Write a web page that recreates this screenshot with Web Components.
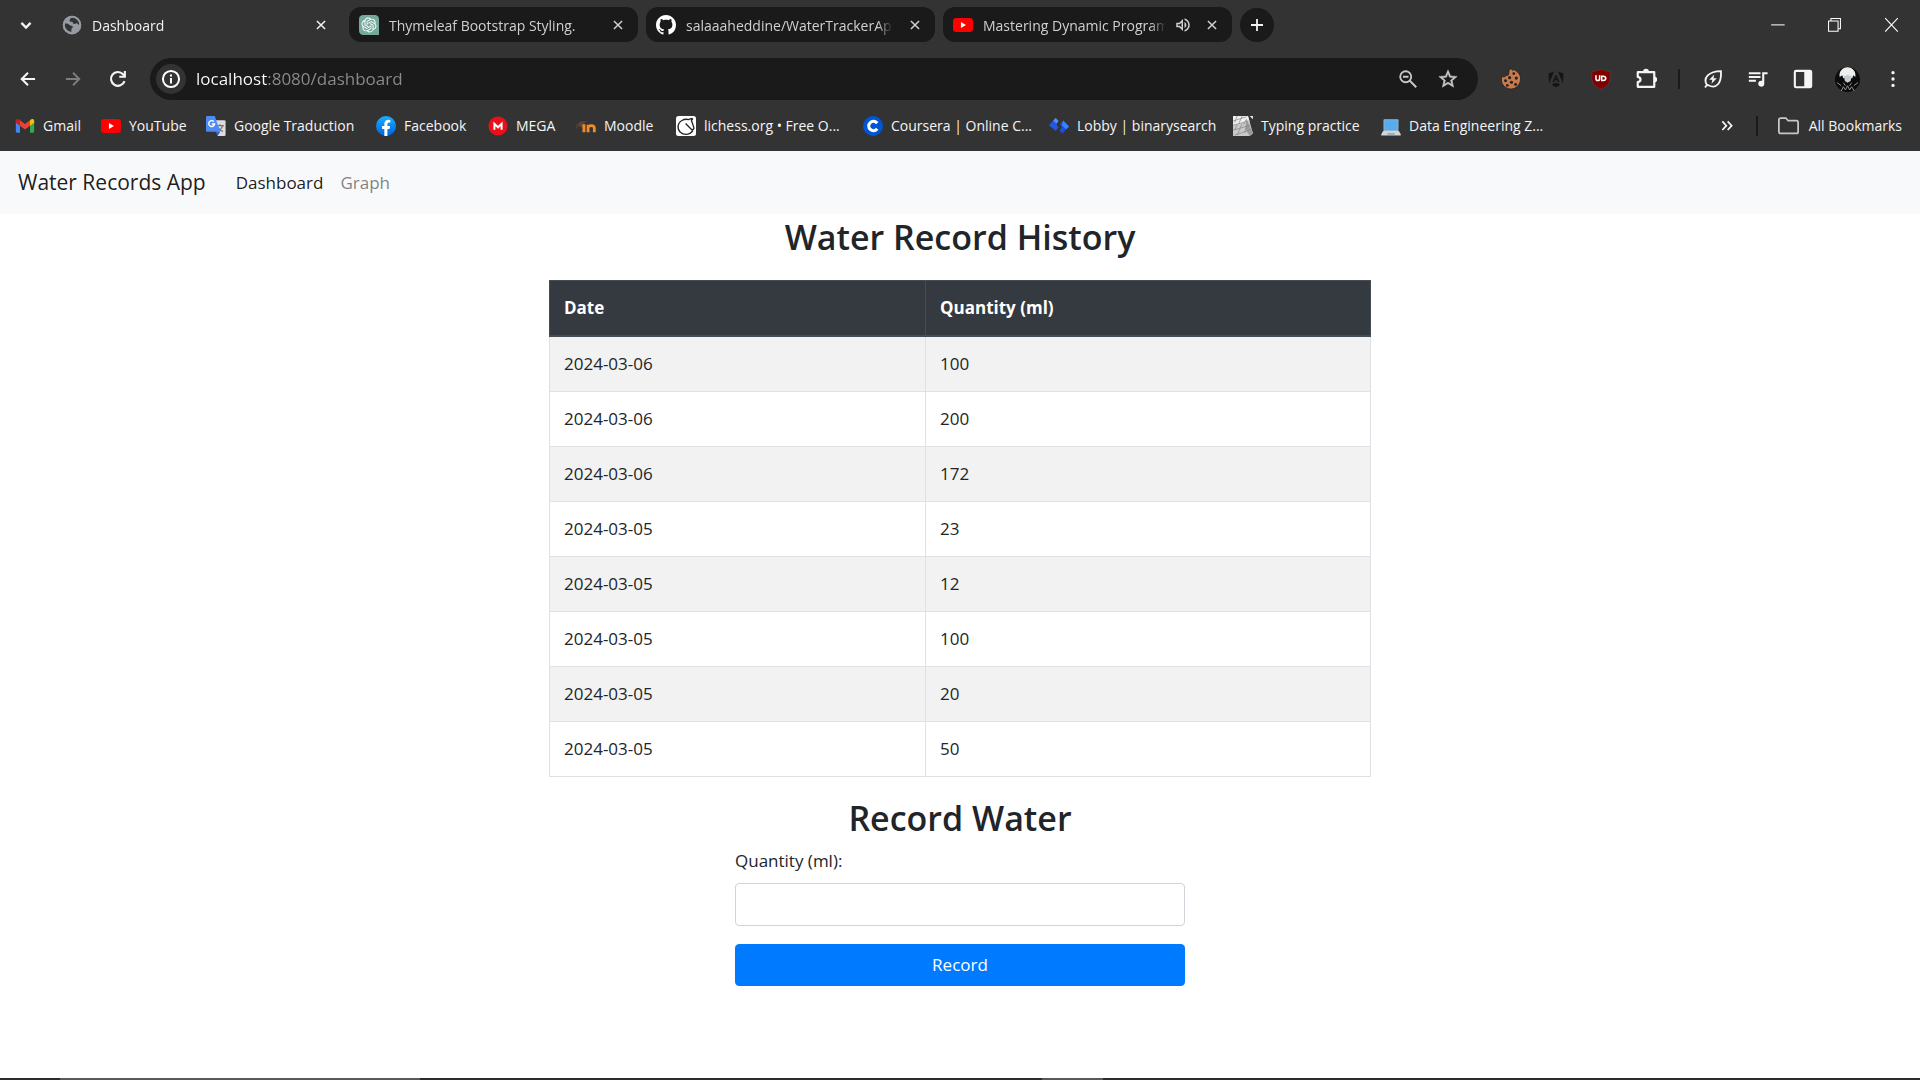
<!DOCTYPE html>
<html lang="en">
<head>
<meta charset="utf-8">
<title>Dashboard</title>
<style>
  body { margin: 0; min-height: 100vh; display: flex; flex-direction: column; background: #fff; color: #212529; font-family: "Open Sans", sans-serif; }
  water-page { flex: 1; }
</style>
</head>
<body>
<browser-chrome></browser-chrome>
<water-page></water-page>
<task-bar></task-bar>

<script>
const ICONS = {
  chevron: '<path d="M6.500 9.500 12 15l5.500-5.500" fill="none" stroke="currentColor" stroke-width="2.800"/>',
  close: '<path d="M5 5l14 14M19 5 5 19" fill="none" stroke="currentColor" stroke-width="2.600"/>',
  plus: '<path d="M12 4v16M4 12h16" fill="none" stroke="currentColor" stroke-width="2.400"/>',
  back: '<path d="M20.500 12H5M12 4.500 4.500 12l7.500 7.500" fill="none" stroke="currentColor" stroke-width="2.500"/>',
  forward: '<path d="M3.500 12H19M12 4.500l7.500 7.500-7.500 7.500" fill="none" stroke="currentColor" stroke-width="2.300"/>',
  reload: '<path d="M19.800 14.500A8.300 8.300 0 1 1 18 6.200l2 2.300" fill="none" stroke="currentColor" stroke-width="2.600"/><path d="M21.500 2.500v8h-8V8h5.500V2.500z" fill="currentColor"/>',
  info: '<circle cx="12" cy="12" r="8.800" fill="none" stroke="currentColor" stroke-width="2.200"/><path d="M10.900 11h2.200v6h-2.200zM10.900 7h2.200v2.300h-2.200z" fill="currentColor"/>',
  zoomout: '<circle cx="9.500" cy="9.500" r="6" fill="none" stroke="currentColor" stroke-width="2"/><path d="M6.500 9.500h6M14 14l7 7" fill="none" stroke="currentColor" stroke-width="2.200"/>',
  star: '<path fill="currentColor" stroke="currentColor" stroke-width=".5" d="M22 9.240l-7.190-.620L12 2 9.190 8.630 2 9.240l5.460 4.730L5.820 21 12 17.270 18.180 21l-1.630-7.030L22 9.240zM12 15.400l-3.760 2.270 1-4.280-3.320-2.880 4.380-.380L12 6.100l1.710 4.040 4.380.380-3.320 2.880 1 4.280L12 15.400z"/>',
  volume: '<path fill="currentColor" d="M3 9v6h4l5 5V4L7 9H3zm7-.170v6.340L7.830 13H5v-2h2.830L10 8.830zM16.500 12c0-1.770-1.020-3.290-2.500-4.030v8.050c1.480-.730 2.500-2.250 2.500-4.020zM14 3.230v2.060c2.890.860 5 3.540 5 6.710s-2.110 5.850-5 6.710v2.060c4.010-.910 7-4.490 7-8.770 0-4.280-2.990-7.860-7-8.770z"/>',
  globe: '<circle cx="12" cy="12" r="11" fill="#969ba3"/><path fill="#333" d="M3.500 10.300c2.200-.2 4 .2 5.300 1.500 1.500 1.500 4.200.6 4.200 2.400 0 1.600-1.700 1.500-1.700 3v3c-4.800-.2-8.800-4.600-7.800-9.900zM13 3.200c-2.600-.3-3.300 1.300-3.800 3-.4 1.600 1 2.100 2.600 2 1.500 0 1 2.300 2.600 2.600 1.500.3 2.100-1.200 3.500-.8 1.500.4 1.300 1.900 3 2C21.300 7.600 17.500 3.800 13 3.200z"/><circle cx="12" cy="12" r="10" fill="none" stroke="#969ba3" stroke-width="2.200"/>',
  openai: '<path d="M5 0h14a5 5 0 0 1 5 5v19H5a5 5 0 0 1-5-5V5a5 5 0 0 1 5-5z" fill="#74aa9c"/><g transform="translate(3 3) scale(.75)"><path fill="#fff" d="M22.2819 9.8211a5.9847 5.9847 0 0 0-.5157-4.9108 6.0462 6.0462 0 0 0-6.5098-2.9A6.0651 6.0651 0 0 0 4.9807 4.1818a5.9847 5.9847 0 0 0-3.9977 2.9 6.0462 6.0462 0 0 0 .7427 7.0966 5.98 5.98 0 0 0 .511 4.9107 6.051 6.051 0 0 0 6.5146 2.9001A5.9847 5.9847 0 0 0 13.2599 24a6.0557 6.0557 0 0 0 5.7718-4.2058 5.9894 5.9894 0 0 0 3.9977-2.9001 6.0557 6.0557 0 0 0-.7475-7.0729zm-9.022 12.6081a4.4755 4.4755 0 0 1-2.8764-1.0408l.1419-.0804 4.7783-2.7582a.7948.7948 0 0 0 .3927-.6813v-6.7369l2.02 1.1686a.071.071 0 0 1 .038.052v5.5826a4.504 4.504 0 0 1-4.4945 4.4944zm-9.6607-4.1254a4.4708 4.4708 0 0 1-.5346-3.0137l.142.0852 4.783 2.7582a.7712.7712 0 0 0 .7806 0l5.8428-3.3685v2.3324a.0804.0804 0 0 1-.0332.0615L9.74 19.9502a4.4992 4.4992 0 0 1-6.1408-1.6464zM2.3408 7.8956a4.485 4.485 0 0 1 2.3655-1.9728V11.6a.7664.7664 0 0 0 .3879.6765l5.8144 3.3543-2.0201 1.1685a.0757.0757 0 0 1-.071 0l-4.8303-2.7865A4.504 4.504 0 0 1 2.3408 7.872zm16.5963 3.8558L13.1038 8.364 15.1192 7.2a.0757.0757 0 0 1 .071 0l4.8303 2.7913a4.4944 4.4944 0 0 1-.6765 8.1042v-5.6772a.79.79 0 0 0-.407-.667zm2.0107-3.0231l-.142-.0852-4.7735-2.7818a.7759.7759 0 0 0-.7854 0L9.409 9.2297V6.8974a.0662.0662 0 0 1 .0284-.0615l4.8303-2.7866a4.4992 4.4992 0 0 1 6.6802 4.66zM8.3065 12.863l-2.02-1.1638a.0804.0804 0 0 1-.038-.0567V6.0742a4.4992 4.4992 0 0 1 7.3757-3.4537l-.142.0805L8.704 5.459a.7948.7948 0 0 0-.3927.6813zm1.0976-2.3654l2.602-1.4998 2.6069 1.4998v2.9994l-2.5974 1.4997-2.6067-1.4997Z"/></g>',
  github: '<g transform="scale(1.5)"><path fill="#fff" d="M8 0C3.58 0 0 3.58 0 8c0 3.54 2.29 6.53 5.47 7.59.4.07.55-.17.55-.38 0-.19-.01-.82-.01-1.49-2.01.37-2.53-.49-2.69-.94-.09-.23-.48-.94-.82-1.13-.28-.15-.68-.52-.01-.53.63-.01 1.08.58 1.23.82.72 1.21 1.87.87 2.33.66.07-.52.28-.87.51-1.07-1.78-.2-3.64-.89-3.64-3.95 0-.87.31-1.59.82-2.15-.08-.2-.36-1.02.08-2.12 0 0 .67-.21 2.2.82.64-.18 1.32-.27 2-.27s1.36.09 2 .27c1.53-1.04 2.2-.82 2.2-.82.44 1.1.16 1.92.08 2.12.51.56.82 1.27.82 2.15 0 3.07-1.87 3.75-3.65 3.95.29.25.54.73.54 1.48 0 1.07-.01 1.93-.01 2.2 0 .21.15.46.55.38A8.01 8.01 0 0 0 16 8c0-4.42-3.58-8-8-8z"/></g>',
  youtube: '<rect y="3.500" width="24" height="17" rx="4" fill="#f00"/><path d="M9.500 8.500v7l6-3.500z" fill="#fff"/>',
  gmail: '<path d="M1 5.500v13A1.700 1.700 0 0 0 2.700 20H6V9.500z" fill="#4285f4"/><path d="M23 5.500v13a1.700 1.700 0 0 1-1.700 1.500H18V9.500z" fill="#34a853"/><path d="M18 5.500v6.300l5-3.800V6c0-2.500-2.500-3-4-1.800z" fill="#fbbc04"/><path d="M1 6v2l5 3.800V5.500L5 4.200C3.500 3 1 3.500 1 6z" fill="#c5221f"/><path d="M6 5v6.800l6 4.500 6-4.500V5l-6 4.500z" fill="#ea4335"/>',
  translate: '<path d="M10 5h12a1.500 1.500 0 0 1 1.500 1.500v16A1.500 1.500 0 0 1 22 24h-8z" fill="#dadce0"/><path d="M12.500 11.500h9M17 9.800v1.700M20 11.500c-.8 3-3 5.500-6 7M14.500 13.500c1 2.500 3 4.300 6 5" fill="none" stroke="#6f7479" stroke-width="1.300"/><path d="M1.500 0h9L17 19H1.500A1.500 1.500 0 0 1 0 17.500v-16A1.500 1.500 0 0 1 1.500 0z" fill="#4c8bf5"/><path d="M11 19h6l-3 5z" fill="#3060c8"/><path d="M9.500 6.800A3.500 3.500 0 1 0 10.300 9.500H7" fill="none" stroke="#fff" stroke-width="1.700"/>',
  facebook: '<linearGradient id="f" x2="0" y2="1"><stop stop-color="#19afff"/><stop offset="1" stop-color="#0062e0"/></linearGradient><circle cx="12" cy="12" r="12" fill="url(#f)"/><path d="M10 23.900v-8.300H7.300V12H10V9.800c0-3.400 1.900-5.300 4.900-5.300l2.300.2v3.100h-1.600c-1.400 0-1.900.9-1.900 1.900V12h3.200l-.6 3.600h-2.600v8.300z" fill="#fff"/>',
  mega: '<circle cx="12" cy="12" r="11.500" fill="#e9101c"/><path d="M7.700 16.500V9.300l4.300 4.200 4.300-4.200v7.200" fill="none" stroke="#fff" stroke-width="2.400"/>',
  moodle: '<path d="M1 10 6 6.500l7-.5-5 4z" fill="#4a4a4a"/><path d="M1.300 10v5" fill="none" stroke="#6a4a30"/><path d="M3.500 12c1-1 2-1.500 4-1.300v3" fill="none" stroke="#6b4628" stroke-width="3"/><path d="M9.500 19.500V10M14.500 19.500v-9M14.500 14.500c0-4 7.500-4 7.500 0v5" fill="none" stroke="#f28c28" stroke-width="3.400"/>',
  lichess: '<rect width="24" height="24" rx="3" fill="#fff"/><path d="M20 3c-2 .2-3.600.5-4.700 1.300C10 2.800 3 6 2.500 12.500 2 18.500 7 22 12 22c4 0 6.500-2 8.300-4.800M20 3c-.3 1-.8 1.700-1.500 2.200l3 9c.3 1-1.400 2.700-2.600 2.200L11.500 9" fill="none" stroke="#222" stroke-width="1.600"/>',
  coursera: '<circle cx="12" cy="12" r="12" fill="#0056d2"/><path d="M17 8.700A5.600 5.600 0 1 0 17 15.300" fill="none" stroke="#fff" stroke-width="3.600"/>',
  binary: '<path d="M0 11 8 2.500l3.500 3.500L9 10.500l2.500 3L8 18z" fill="#2456e6"/><path d="M5 5.500 8 2.500l3.500 3.500L9 9z" fill="#4a90ff"/><path d="M13 9.500 17 5.500l7 7-8 8.500-3.500-4 3-3.500z" fill="#1f4fe0"/><path d="m17 5.500 7 7-3.500 3.500-5-5z" fill="#3b82f6"/>',
  typing: '<path d="M0 0h18l6 21-4 3H0z" fill="#c9c9c9"/><path d="M0 0h18l2 7-20 4z" fill="#f0f0f0"/><path d="M16 3 24 21l-4 3-5-8z" fill="#9b9b9b"/><path d="M0 6l16-5M0 11l19-5M0 17l21-6M2 23l21-7M5 0l-3 8M11 0l-4 9M16 4l-3 6M5 10l-3 7M11 9l-3 7M17 10l-3 10M8 16l-3 7" stroke="#8a8a8a" stroke-width=".9" fill="none"/><path d="M20 0h4v4z" fill="#e8e8e8"/>',
  laptop: '<rect x="3" y="4" width="18" height="14" rx="1" fill="#9fb8c8"/><rect x="4" y="5" width="16" height="12" fill="#55acee"/><path d="M2.500 18h19L24 22.500a1 1 0 0 1-1 1H1a1 1 0 0 1-1-1z" fill="#ccd6dd"/><path d="M8 20.500h8l.5 2h-9z" fill="#99aab5"/>',
  cookie: '<path d="M10 1.500c2-.8 3.500-.3 3.500 1 1-.8 3-.5 4 .5 3 2 5 5 5 8.500C22.500 18 17.500 23 12 23S1.500 18.500 1.500 13c0-1.500.3-3 1-4 1.500 1.300 3.800.6 4-1 2 .5 3.500-.5 3-2.500z" fill="#c57b4e" stroke="#2a211c"/><g fill="#2a211c"><circle cx="15" cy="6" r="1.500"/><circle cx="10.500" cy="10.500" r="1.700"/><circle cx="17.800" cy="11" r="1.700"/><circle cx="6" cy="14" r="1.600"/><circle cx="12.500" cy="15.500" r="1.700"/><circle cx="8" cy="19" r="1.500"/><circle cx="17" cy="18" r="1.600"/></g>',
  angular: '<path d="M9.500 3 3 5.500 3.800 17zM14.500 3 21 5.500 20.200 17zM7.500 19.500 12 22l4.500-2.500-1-2.300h-7zM12 6.500 7.800 15.500h2l.9-2h2.600l.9 2h2zM12 9.800l.9 2.200h-1.800z" fill="#141414"/>',
  shield: '<path d="M12 1c3 1.800 6 2.600 10 2.800V10c0 7-3.500 10.300-10 13C5.500 20.300 2 17 2 10V3.800C6 3.600 9 2.800 12 1z" fill="#800000" stroke="#6a4040" stroke-width=".6"/><path d="M6.500 8v3.700c0 2.600 4 2.600 4 0V8M12.800 8.900v4.700h1.700c3.600 0 3.600-4.700 0-4.700z" fill="none" stroke="#fff" stroke-width="1.700"/>',
  puzzle: '<path d="M3 4.500h18v16H3v-5.200c4-.6 4-5 0-5.600z" fill="none" stroke="currentColor" stroke-width="2.400" stroke-linejoin="round"/><path d="M8.800 4a3.200 3.200 0 0 1 6.400 0zM21 9.300a3.200 3.200 0 0 1 0 6.400z" fill="currentColor"/>',
  leaf: '<path d="M4.700 19.300C-.5 11 7 2.500 21.500 2.500 22.500 17 16 24.500 6.500 19.500c-1.800-.5-3 .5-4 2.700" fill="none" stroke="currentColor" stroke-width="2.200"/><path d="M13.500 6.500 7.500 13h3.700l-1 4.800L16.500 11h-3.900z" fill="currentColor"/>',
  queue: '<path fill="currentColor" d="M15 4H1v2.300h14V4zm0 4.500H1v2.300h14V8.500zM1 15.300h8.500V13H1v2.300zM17 4v10.180c-.310-.110-.650-.180-1-.180a3.600 3.600 0 1 0 3.500 3.600V6.300h4V4z"/>',
  panel: '<rect x="2.200" y="2.200" width="19.600" height="19.600" rx="1.500" fill="none" stroke="currentColor" stroke-width="2.500"/><path d="M13.500 2h8v20h-8z" fill="currentColor"/>',
  avatar: '<circle cx="12" cy="12" r="12" fill="#0b0b0b"/><path d="M4.500 9.500c-1-5 2.500-9 7.500-9.200 5 .1 8.500 4.200 7.500 9.200L17.500 8l-1 3-3-2-2 2.500L9.500 9 8 11 7 8z" fill="#eee"/><path d="M8.500 9 12 7.500 16 9l-1 4.500-3 1.500-2.500-1.500z" fill="#c3cdd2"/><path d="m6 23 2-4 2 3 2-4 2 4 2-3 2.500 4M2 15l4 3M22 15l-4 3M8 15l2 3M16 15l-2 3" stroke="#999" fill="none" stroke-width=".9"/>',
  dots: '<g fill="currentColor"><circle cx="12" cy="3.500" r="2.200"/><circle cx="12" cy="12" r="2.200"/><circle cx="12" cy="20.500" r="2.200"/></g>',
  folder: '<path d="M1 5.500a2 2 0 0 1 2-2h6l2.500 3H21a2 2 0 0 1 2 2V19a2 2 0 0 1-2 2H3a2 2 0 0 1-2-2z" fill="none" stroke="currentColor" stroke-width="2"/>',
  more: '<path d="m5 5 6 6.500L5 18M13 5l6 6.500-6 6.500" fill="none" stroke="currentColor" stroke-width="2.600"/>',
  minimize: '<path d="M4 12.500h17" stroke="currentColor" stroke-width="1.300"/>',
  restore: '<path d="M4.500 7.500h12v13h-12zM7.500 7V4.500h12v13H17" fill="none" stroke="currentColor" stroke-width="1.300"/>',
  exit: '<path d="m4 4 16 17M20 4 4 21" fill="none" stroke="currentColor" stroke-width="1.400"/>'
};

/* Base class: renders the template() result of a subclass into an open shadow root. */
class ShadowElement extends HTMLElement {
  connectedCallback() {
    if (!this.shadowRoot) this.attachShadow({ mode: "open" }).innerHTML = this.template();
  }
  attr(name) { return this.getAttribute(name) || ""; }
}

customElements.define("ui-icon", class extends ShadowElement {
  template() {
    return `<style>:host{display:block;flex:none;width:var(--size,20px);height:var(--size,20px)}svg{display:block;width:100%;height:100%}</style>
      <svg viewBox="0 0 24 24" aria-hidden="true">${ICONS[this.attr("name")]}</svg>`;
  }
});

customElements.define("icon-button", class extends ShadowElement {
  template() {
    return `<style>
      :host{display:block;flex:none}
      button{display:flex;align-items:center;justify-content:center;width:var(--box,45px);height:var(--box-height,var(--box,42px));padding:0;border:0;border-radius:var(--radius,0);background:var(--fill,none);color:inherit}
      </style><button type="button" aria-label="${this.attr("label")}"><ui-icon name="${this.attr("icon")}"></ui-icon></button>`;
  }
});

customElements.define("browser-tab", class extends ShadowElement {
  template() {
    return `<style>
      :host{display:flex;align-items:center;flex:0 1 289px;min-width:0;box-sizing:border-box;height:35px;padding:0 12px 0 10px;gap:14px;border-radius:12px;background:#1a1a1a;color:#d0d0d0;font-size:14px;line-height:20px}
      :host([active]){background:none;color:#f2f2f2}
      .title{display:flex;align-items:center;gap:10px;flex:1;min-width:0}
      .text{flex:1;min-width:0;padding-top:2px;overflow:hidden;white-space:nowrap;-webkit-mask:linear-gradient(to left,transparent,#000 16px);mask:linear-gradient(to left,transparent,#000 16px)}
      .end{display:flex;align-items:center;gap:12px;--size:18px;--box:16px}
      .end icon-button{--size:14px}
      :host([audible]){gap:8px}
      </style>
      <div class="title"><ui-icon name="${this.attr("icon")}"></ui-icon><span class="text"><slot></slot></span></div>
      <div class="end">${this.hasAttribute("audible") ? '<ui-icon name="volume"></ui-icon>' : ""}<icon-button icon="close" label="Close tab"></icon-button></div>`;
  }
});

customElements.define("tab-strip", class extends ShadowElement {
  template() {
    return `<style>
      :host{display:flex;align-items:flex-start;padding:7px 0 16px 7px;color:#f2f2f2}
      .tabs{display:flex;align-items:center;flex:1;min-width:0;gap:8px}
      .search{--box:37px;--box-height:35px;--size:20px}
      .new{--box:34px;--radius:17px;--fill:#1a1a1a;--size:18px}
      .window{display:flex;--box:57px;--box-height:35px;--size:19px;color:#fff}
      </style>
      <div class="tabs">
        <icon-button class="search" icon="chevron" label="Search tabs"></icon-button>
        <browser-tab active icon="globe">Dashboard</browser-tab>
        <browser-tab icon="openai">Thymeleaf Bootstrap Styling.</browser-tab>
        <browser-tab icon="github">salaaaheddine/WaterTrackerApp</browser-tab>
        <browser-tab icon="youtube" audible>Mastering Dynamic Programming</browser-tab>
        <icon-button class="new" icon="plus" label="New tab"></icon-button>
      </div>
      <div class="window">
        <icon-button icon="minimize" label="Minimize"></icon-button>
        <icon-button icon="restore" label="Restore"></icon-button>
        <icon-button icon="exit" label="Close"></icon-button>
      </div>`;
  }
});

customElements.define("address-bar", class extends ShadowElement {
  template() {
    return `<style>
      :host{display:flex;align-items:center;flex:1;min-width:0;height:42px;box-sizing:border-box;margin:0 10px;padding:0 10px 0 6px;border-radius:21px;background:#1a1a1a}
      .info{--box:30px;--radius:15px;--fill:#333;--size:22px;color:#fff}
      input{flex:1;min-width:0;margin:0 0 0 10px;padding:0;border:0;outline:0;font:17px/24px "Open Sans",sans-serif;color:#8c8c8c;
        background:linear-gradient(90deg,#fff 0 72px,#8c8c8c 72px);-webkit-background-clip:text;background-clip:text;-webkit-text-fill-color:transparent}
      .actions{display:flex;--box:40px;--size:22px;color:#c8c8c8}
      </style>
      <icon-button class="info" icon="info" label="View site information"></icon-button>
      <input type="text" aria-label="Address and search bar" value="localhost:8080/dashboard" spellcheck="false">
      <div class="actions">
        <icon-button icon="zoomout" label="Zoom"></icon-button>
        <icon-button icon="star" label="Bookmark this tab"></icon-button>
      </div>`;
  }
});

customElements.define("tool-bar", class extends ShadowElement {
  template() {
    return `<style>
      :host{display:flex;align-items:center;padding:0 5px;color:#f5f5f5}
      .group{display:flex;align-items:center}
      .nav{--size:20px}.off{color:#7d7d7d}
      hr{width:2px;height:20px;margin:0 10px;border:0;background:#1a1a1a}
      .avatar{--size:25px}
      .menu{--size:18px}
      .extension{--size:22px}
      </style>
      <div class="group nav">
        <icon-button icon="back" label="Back"></icon-button>
        <icon-button class="off" icon="forward" label="Forward"></icon-button>
        <icon-button icon="reload" label="Reload"></icon-button>
      </div>
      <address-bar></address-bar>
      <div class="group">
        <icon-button class="extension" icon="cookie" label="Cookie editor"></icon-button>
        <icon-button icon="angular" label="Angular DevTools"></icon-button>
        <icon-button class="extension" icon="shield" label="uBlock Origin"></icon-button>
        <icon-button class="extension" icon="puzzle" label="Extensions"></icon-button>
        <hr>
        <icon-button icon="leaf" label="Energy saver"></icon-button>
        <icon-button icon="queue" label="Media controls"></icon-button>
        <icon-button icon="panel" label="Side panel"></icon-button>
        <icon-button class="avatar" icon="avatar" label="Profile"></icon-button>
        <icon-button class="menu" icon="dots" label="Menu"></icon-button>
      </div>`;
  }
});

customElements.define("bookmark-link", class extends ShadowElement {
  template() {
    return `<style>
      :host{display:block;flex:none}
      a{display:flex;align-items:center;gap:var(--gap,8px);color:#f5f5f5;font-size:14px;line-height:20px;text-decoration:none;white-space:nowrap}
      ui-icon{color:#c8c8c8}
      </style><a href="#"><ui-icon name="${this.attr("icon")}"></ui-icon><span><slot></slot></span></a>`;
  }
});

customElements.define("bookmark-bar", class extends ShadowElement {
  template() {
    return `<style>
      :host{display:flex;align-items:center;height:51px;box-sizing:border-box;padding:0 18px 0 15px;color:#f5f5f5}
      .links{display:grid;grid-template-columns:86px 105px 170px 112px 88px 100px 187px 186px 184px 148px auto;align-items:center;flex:1;min-width:0;overflow:hidden}
      .more{--box:38px;--size:16px}
      hr{width:2px;height:20px;margin:0 20px 0 10px;border:0;background:#1a1a1a}
      .all{--gap:10px;--size:21px}
      </style>
      <div class="links">
        <bookmark-link icon="gmail">Gmail</bookmark-link>
        <bookmark-link icon="youtube">YouTube</bookmark-link>
        <bookmark-link icon="translate">Google Traduction</bookmark-link>
        <bookmark-link icon="facebook">Facebook</bookmark-link>
        <bookmark-link icon="mega">MEGA</bookmark-link>
        <bookmark-link icon="moodle">Moodle</bookmark-link>
        <bookmark-link icon="lichess">lichess.org • Free O...</bookmark-link>
        <bookmark-link icon="coursera">Coursera | Online C...</bookmark-link>
        <bookmark-link icon="binary">Lobby | binarysearch</bookmark-link>
        <bookmark-link icon="typing">Typing practice</bookmark-link>
        <bookmark-link icon="laptop">Data Engineering Z...</bookmark-link>
      </div>
      <icon-button class="more" icon="more" label="More bookmarks"></icon-button>
      <hr>
      <bookmark-link class="all" icon="folder">All Bookmarks</bookmark-link>`;
  }
});

customElements.define("browser-chrome", class extends ShadowElement {
  template() {
    return `<style>:host{display:block;background:#333}</style><tab-strip></tab-strip><tool-bar></tool-bar><bookmark-bar></bookmark-bar>`;
  }
});

customElements.define("site-nav", class extends ShadowElement {
  template() {
    return `<style>
      :host{display:block;background:#f8f9fa}
      nav{display:flex;align-items:center;height:63px;padding:0 18px;gap:17px;font-size:17px;line-height:27px}
      a{text-decoration:none;color:rgba(0,0,0,.5)}
      .brand{margin-right:13px;font-size:21px;color:rgba(0,0,0,.9)}
      .current{color:rgba(0,0,0,.9)}
      </style>
      <nav><a class="brand" href="#">Water Records App</a><a class="current" href="#" aria-current="page">Dashboard</a><a href="#">Graph</a></nav>`;
  }
});

customElements.define("record-table", class extends ShadowElement {
  template() {
    const rows = [["2024-03-06", 100], ["2024-03-06", 200], ["2024-03-06", 172], ["2024-03-05", 23],
                  ["2024-03-05", 12], ["2024-03-05", 100], ["2024-03-05", 20], ["2024-03-05", 50]];
    return `<style>
      :host{display:block;width:100%;max-width:822px}
      table{width:100%;border-collapse:collapse;border:1px solid #dee2e6;font-size:17px;line-height:26px}
      th,td{padding:14px;border:1px solid #dee2e6;text-align:left}
      th{background:#343a40;border-color:#454d55;border-bottom-width:2px;color:#fff;font-weight:700}
      th:first-child{box-sizing:border-box;width:376px}
      tbody tr:nth-child(odd){background:#f2f2f2}
      </style>
      <table><thead><tr><th scope="col">Date</th><th scope="col">Quantity (ml)</th></tr></thead>
      <tbody>${rows.map(([d, q]) => `<tr><td>${d}</td><td>${q}</td></tr>`).join("")}</tbody></table>`;
  }
});

customElements.define("record-form", class extends ShadowElement {
  template() {
    return `<style>
      :host{display:block;width:100%;max-width:450px}
      form{display:flex;flex-direction:column;font-size:17px;line-height:27px}
      input,button{box-sizing:border-box;width:100%;height:43px;padding:7px 14px;border-radius:4px;font:inherit}
      input{margin:9px 0 18px;border:1px solid #ced4da;background:#fff;color:#495057}
      button{height:42px;padding:6px 14px;line-height:26px;border:1px solid #007bff;background:#007bff;color:#fff}
      </style>
      <form><label for="quantity">Quantity (ml):</label><input id="quantity" name="quantity" type="text"><button type="button">Record</button></form>`;
  }
});

customElements.define("water-page", class extends ShadowElement {
  template() {
    return `<style>
      :host{display:block}
      main{display:flex;flex-direction:column;align-items:center}
      h2{margin:0;font-size:34px;line-height:46px;font-weight:600}
      record-table{margin:20px 0 18px}
      record-form{margin-top:6px}
      </style>
      <site-nav></site-nav>
      <main><h2>Water Record History</h2><record-table></record-table><h2>Record Water</h2><record-form></record-form></main>`;
  }
});

customElements.define("task-bar", class extends ShadowElement {
  template() {
    return `<style>
      :host{display:flex;height:2px;background:#2d2b2c}
      i{width:360px;margin-left:60px;background:#5a5858}
      i + i{width:61px;margin-left:622px}
      </style><i></i><i></i>`;
  }
});
</script>
</body>
</html>
